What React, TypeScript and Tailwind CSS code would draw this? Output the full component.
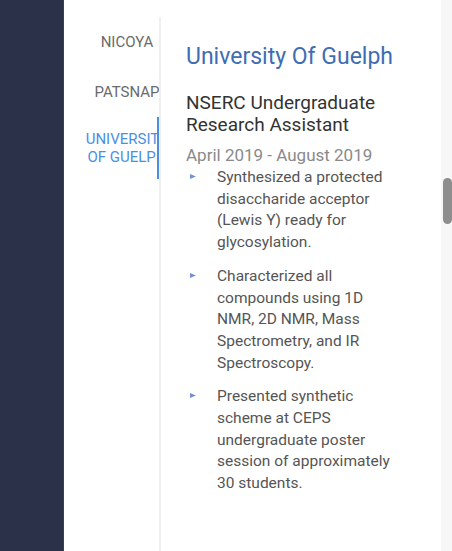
const tabs = [
  { label: "NICOYA", active: false, h: "h-[50px]" },
  { label: "PATSNAP", active: false, h: "h-[50px]" },
  { label: "UNIVERSITY OF GUELPH", active: true, h: "h-[62px]" },
];

const points = [
  "Synthesized a protected disaccharide acceptor (Lewis Y) ready for glycosylation.",
  "Characterized all compounds using 1D NMR, 2D NMR, Mass Spectrometry, and IR Spectroscopy.",
  "Presented synthetic scheme at CEPS undergraduate poster session of approximately 30 students.",
];

export default function App() {
  return (
    <div className="flex h-[551px] w-[452px] overflow-hidden bg-white font-['Roboto',sans-serif]">
      {/* dark side rail */}
      <div className="w-[64px] shrink-0 border-r border-[#3a4058] bg-[#2b3148]" />

      {/* tab list */}
      <div className="mt-[17px] w-[97px] shrink-0 border-r-2 border-[#efefef]">
        {tabs.map((t) => (
          <div
            key={t.label}
            className={`relative flex ${t.h} items-center justify-center overflow-hidden pl-[31px] text-[15px] leading-[18px] ${
              t.active ? "text-[#4a90e2]" : "text-[#6b6b6b]"
            }`}
          >
            <span className="w-[86px] shrink-0 text-center">{t.label}</span>
            {t.active && <div className="absolute right-0 top-0 h-full w-[2px] bg-[#4a90e2]" />}
          </div>
        ))}
      </div>

      {/* job details */}
      <div className="flex-1 pl-[25px] pr-[42px] pt-[43px]">
        <h3 className="text-[23px] leading-[28px] text-[#3f6db3]">University Of Guelph</h3>
        <h4 className="mt-[21px] text-[19px] leading-[22px] text-[#333333]">
          NSERC Undergraduate Research Assistant
        </h4>
        <p className="mt-[8px] text-[17px] leading-[22px] text-[#8a8a8a]">April 2019 - August 2019</p>
        <ul className="mt-[1px]">
          {points.map((p, i) => (
            <li key={i} className={`flex ${i > 0 ? "mt-[12px]" : ""}`}>
              <div className="w-[31px] shrink-0 pl-[4px] pt-[7px]">
                <svg width="6" height="5" viewBox="0 0 6 5">
                  <polygon points="0,0 6,2.5 0,5" fill="#7393d6" />
                </svg>
              </div>
              <span className="text-[15.5px] leading-[21.7px] text-[#555555]">{p}</span>
            </li>
          ))}
        </ul>
      </div>

      {/* scrollbar */}
      <div className="w-[11px] shrink-0 bg-[#f7f7f7] pl-[2px] pt-[178px]">
        <div className="h-[46px] w-[9px] rounded-full bg-[#8e8e8e]" />
      </div>
    </div>
  );
}
